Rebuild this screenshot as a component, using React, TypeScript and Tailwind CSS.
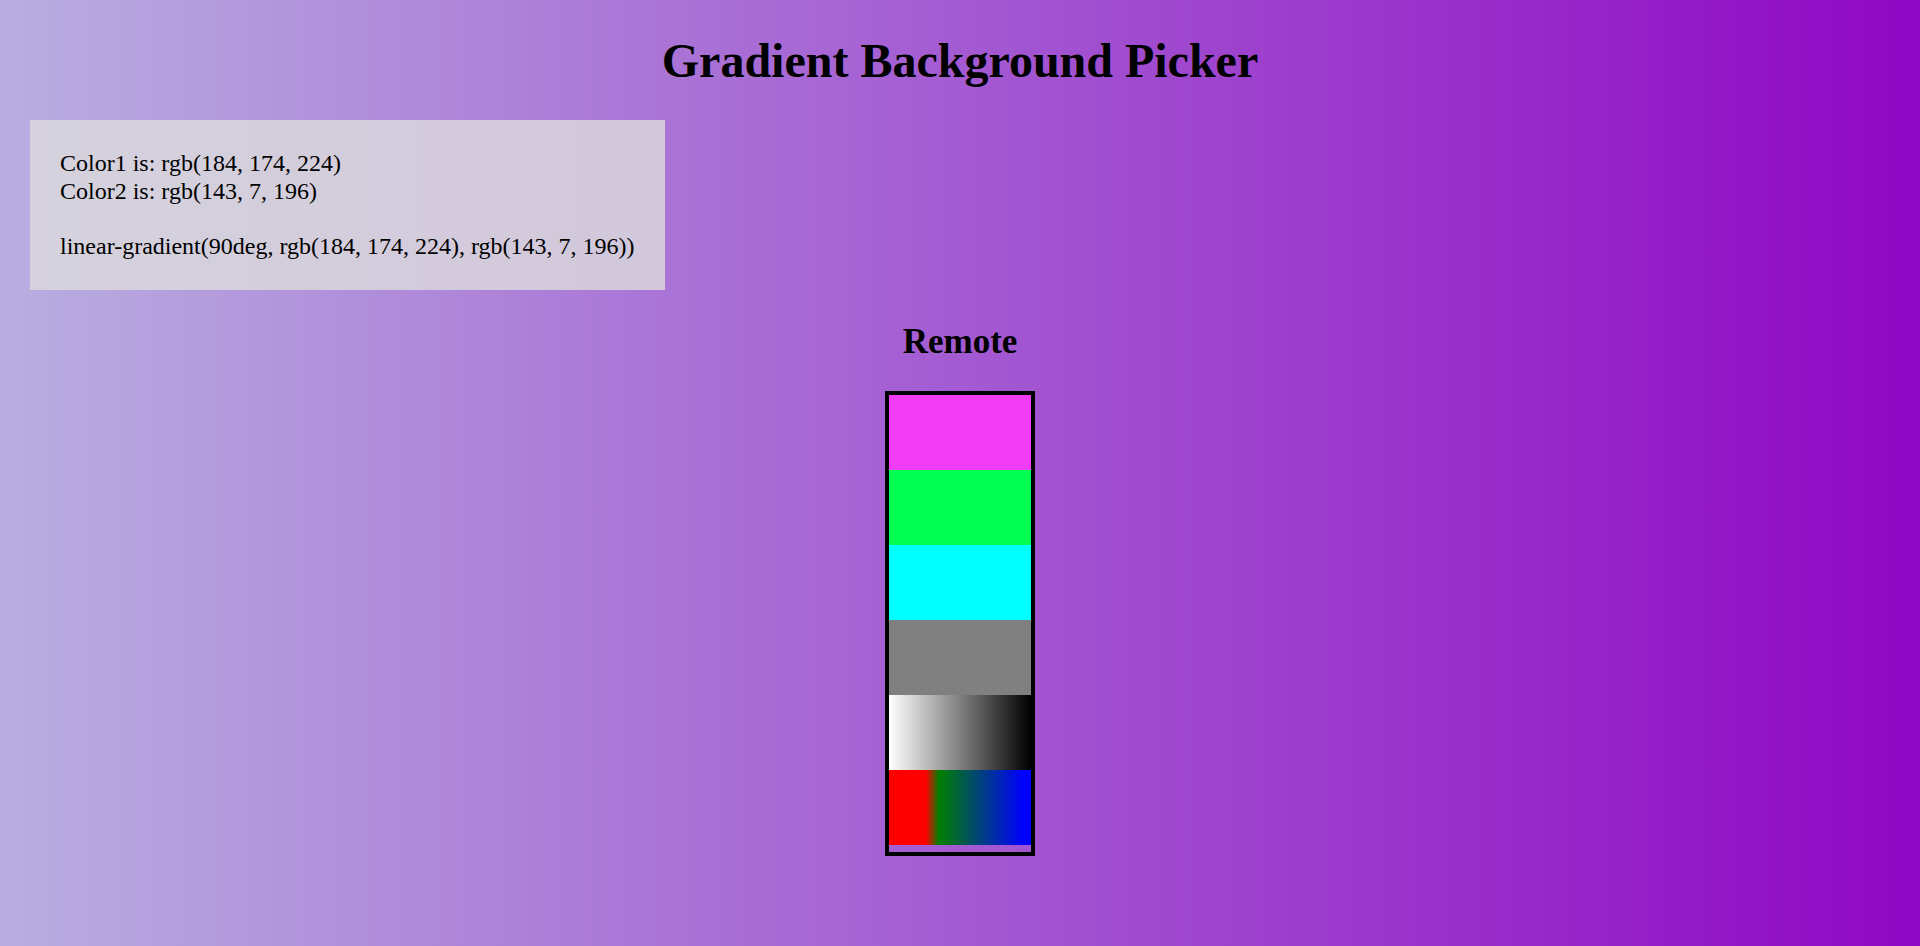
import React from "react";

export default function App() {
  const rows = [
    "bg-[#f13cf5]",
    "bg-[#00ff50]",
    "bg-[#00ffff]",
    "bg-[#808080]",
    "bg-[linear-gradient(90deg,#ffffff,#000000)]",
    "bg-[linear-gradient(90deg,#ff0000_26%,#008000_35%,#0000ff_95%)]",
  ];
  return (
    <div className="flex min-h-screen w-full flex-col bg-[linear-gradient(90deg,rgb(184,174,224),rgb(143,7,196))] font-['Liberation_Serif','Times_New_Roman',serif] text-black">
      <h1 className="mt-[33px] mb-[32px] text-center text-[48px] font-bold leading-[55px]">
        Gradient Background Picker
      </h1>
      <div className="ml-[30px] w-[635px] self-start bg-[rgba(220,220,220,0.8)] p-[30px] text-[24px] leading-[27.6px]">
        <div>Color1 is: rgb(184, 174, 224)</div>
        <div>Color2 is: rgb(143, 7, 196)</div>
        <div>&nbsp;</div>
        <div>linear-gradient(90deg, rgb(184, 174, 224), rgb(143, 7, 196))</div>
      </div>
      <h2 className="mt-[32px] mb-[29px] text-center text-[35px] font-bold leading-[40px]">
        Remote
      </h2>
      <div className="flex w-[150px] flex-col self-center border-4 border-black pb-[7px]">
        {rows.map((c, i) => (
          <div key={i} className={`h-[75px] w-full ${c}`} />
        ))}
      </div>
    </div>
  );
}
